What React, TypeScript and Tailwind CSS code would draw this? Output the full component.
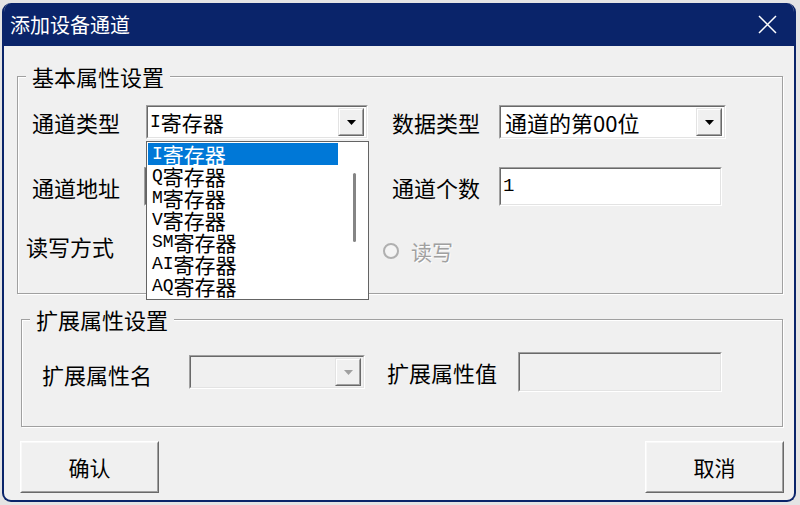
import React from "react";

const cjk = "font-['Noto_Sans_CJK_SC',sans-serif]";
const mono = "font-['Liberation_Mono','Noto_Sans_CJK_SC',monospace]";

const regItems = ["I", "Q", "M", "V", "SM", "AI", "AQ"];

// classic sunken 3D frame
function Sunken({
	className,
	inner,
	children,
}: {
	className: string;
	inner: string;
	children?: React.ReactNode;
}) {
	return (
		<div
			className={`${className} border border-t-[#a0a0a0] border-l-[#a0a0a0] border-b-white border-r-white`}
		>
			<div
				className={`h-full w-full border border-t-[#696969] border-l-[#696969] border-b-[#e3e3e3] border-r-[#e3e3e3] ${inner}`}
			>
				{children}
			</div>
		</div>
	);
}

function DropButton({ disabled = false }: { disabled?: boolean }) {
	return (
		<div className="h-[28px] w-[26px] shrink-0 border border-t-[#e3e3e3] border-l-[#e3e3e3] border-b-[#696969] border-r-[#696969]">
			<div className="flex h-full w-full items-center justify-center border border-t-white border-l-white border-b-[#a0a0a0] border-r-[#a0a0a0] bg-[#f0f0f0]">
				<svg width="9" height="5" viewBox="0 0 9 5">
					<path d="M0 0h9L4.5 5z" fill={disabled ? "#a0a0a0" : "#000"} />
				</svg>
			</div>
		</div>
	);
}

function Combo({
	width,
	height,
	children,
	disabled = false,
}: {
	width: string;
	height: string;
	children?: React.ReactNode;
	disabled?: boolean;
}) {
	return (
		<Sunken
			className={`${width} ${height} shrink-0`}
			inner={`flex items-center justify-between pr-[2px] ${disabled ? "bg-[#f0f0f0]" : "bg-white"}`}
		>
			<div className="flex items-center leading-none">{children}</div>
			<DropButton disabled={disabled} />
		</Sunken>
	);
}

function RegLabel({ prefix }: { prefix: string }) {
	return (
		<span className="flex items-center leading-none">
			<span className={`${mono} text-[18px]`}>{prefix}</span>
			<span className="text-[21px]">寄存器</span>
		</span>
	);
}

function Radio({ label, disabled = false }: { label: string; disabled?: boolean }) {
	return (
		<div className="flex items-center">
			<div className="h-[16px] w-[16px] rounded-full border-2 border-[#b0b0b0] bg-[#f4f4f4]" />
			<span
				className={`ml-[12px] text-[21px] leading-none ${disabled ? "text-[#a0a0a0] [text-shadow:1px_1px_0_#fff]" : "text-black"}`}
			>
				{label}
			</span>
		</div>
	);
}

function Group({
	title,
	className,
	children,
}: {
	title: string;
	className: string;
	children: React.ReactNode;
}) {
	return (
		<div
			className={`relative border border-[#a0a0a0] shadow-[inset_1px_1px_0_#fff,1px_1px_0_#fff] ${className}`}
		>
			<span className="absolute -top-[14px] left-[8px] bg-[#f0f0f0] px-[6px] text-[22px] leading-[26px] text-black">
				{title}
			</span>
			{children}
		</div>
	);
}

function Button({ label }: { label: string }) {
	return (
		<div className="h-[52px] w-[139px] border border-t-white border-l-white border-b-[#696969] border-r-[#696969]">
			<div className="flex h-full w-full items-center justify-center border border-t-[#f8f8f8] border-l-[#f8f8f8] border-b-[#a0a0a0] border-r-[#a0a0a0] bg-[#f0f0f0] text-[21px] leading-none text-black">
				{label}
			</div>
		</div>
	);
}

export default function App() {
	return (
		<div className={`h-[505px] w-[800px] bg-[#e4e4e4] pl-[2px] pt-[3px] ${cjk}`}>
			<div className="flex h-[499px] w-[794px] flex-col overflow-hidden rounded-[9px] border-x-2 border-b-2 border-[#0a246a] bg-[#f0f0f0]">
				{/* Title bar */}
				<div className="flex h-[43px] shrink-0 items-center justify-between bg-[#0a246a] pl-[6px] pr-[17px]">
					<span className="text-[20px] leading-none text-white">添加设备通道</span>
					<svg width="19" height="19" viewBox="0 0 19 19">
						<path d="M1 1L18 18M18 1L1 18" stroke="#fff" strokeWidth="1.5" />
					</svg>
				</div>

				{/* Body */}
				<div className="flex flex-1 flex-col">
					<Group title="基本属性设置" className="ml-[13px] mt-[30px] h-[218px] w-[766px]">
						{/* row 1 */}
						<div className="mt-[28px] flex h-[34px] items-center">
							<span className="w-[128px] shrink-0 pl-[14px] text-[22px] leading-none">通道类型</span>
							<div className="relative">
								<Combo width="w-[222px]" height="h-[34px]">
									<span className="pl-[2px]">
										<RegLabel prefix="I" />
									</span>
								</Combo>
								{/* open list */}
								<div className="absolute left-0 top-[36px] z-10 flex h-[159px] w-[223px] border border-[#646464] bg-white p-[1px]">
									<div className="flex w-[190px] flex-col">
										{regItems.map((p, i) => (
											<div
												key={p}
												className={`flex h-[22px] shrink-0 items-center pl-[4px] ${i === 0 ? "bg-[#0078d7] text-white" : "text-black"}`}
											>
												<RegLabel prefix={p} />
											</div>
										))}
									</div>
									<div className="flex-1 pt-[30px]">
										<div className="ml-[15px] h-[69px] w-[3px] rounded-full bg-[#858585]" />
									</div>
								</div>
							</div>
							<span className="ml-[24px] w-[107px] shrink-0 text-[22px] leading-none">数据类型</span>
							<Combo width="w-[227px]" height="h-[34px]">
								<span className="pl-[4px] text-[22px]">通道的第00位</span>
							</Combo>
						</div>

						{/* row 2 */}
						<div className="mt-[28px] flex h-[39px] items-center">
							<span className="w-[126px] shrink-0 pl-[14px] text-[22px] leading-none">通道地址</span>
							<Sunken className="h-[39px] w-[224px] shrink-0" inner="bg-white" />
							<span className="ml-[24px] w-[107px] shrink-0 text-[22px] leading-none">通道个数</span>
							<Sunken className="h-[39px] w-[223px] shrink-0" inner="flex items-center bg-white pl-[2px]">
								<span className={`${mono} text-[19px] leading-none`}>1</span>
							</Sunken>
						</div>

						{/* row 3 */}
						<div className="mt-[29px] flex h-[22px] items-center">
							<span className="w-[128px] shrink-0 pl-[8px] text-[22px] leading-none">读写方式</span>
							{/* other options sit under the open list */}
							<div className="w-[223px] shrink-0" />
							<div className="ml-[14px] mt-[10px]">
								<Radio label="读写" disabled />
							</div>
						</div>
					</Group>

					<Group title="扩展属性设置" className="ml-[17px] mt-[25px] h-[108px] w-[762px]">
						<div className="mt-[32px] flex h-[40px] items-center">
							<span className="w-[167px] shrink-0 pl-[20px] pt-[3px] text-[22px] leading-none">扩展属性名</span>
							<Combo width="w-[176px]" height="h-[34px]" disabled />
							<span className="ml-[22px] w-[131px] shrink-0 text-[22px] leading-none">扩展属性值</span>
							<Sunken className="h-[40px] w-[204px] shrink-0" inner="bg-[#f0f0f0]" />
						</div>
					</Group>

					<div className="mt-[14px] flex justify-between pl-[16px] pr-[10px]">
						<Button label="确认" />
						<Button label="取消" />
					</div>
				</div>
			</div>
		</div>
	);
}
